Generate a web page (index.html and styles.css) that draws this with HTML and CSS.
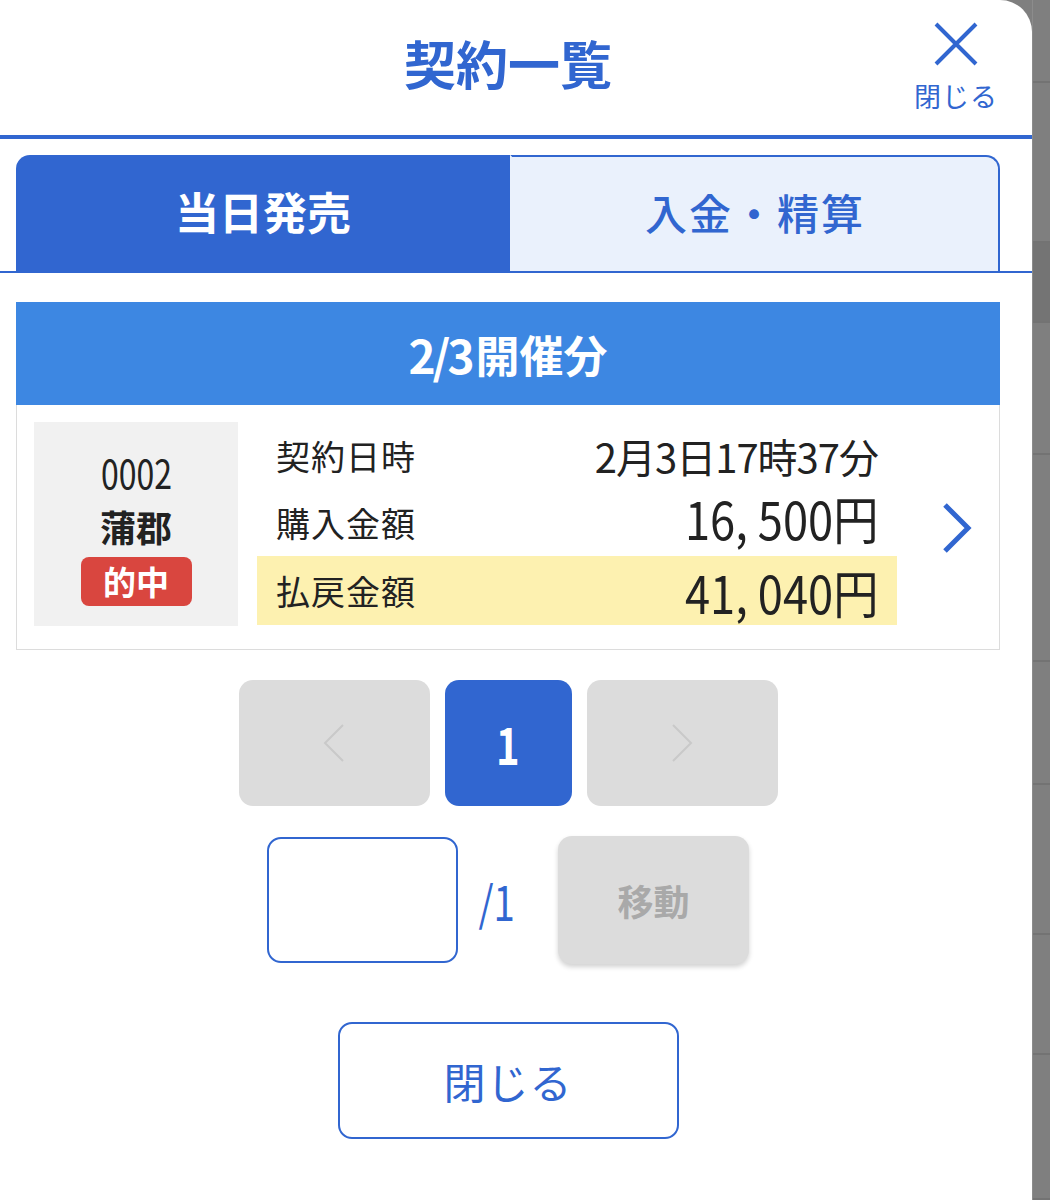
FILE: index.html
```html
<!DOCTYPE html>
<html lang="ja">
<head>
<meta charset="utf-8">
<title>契約一覧</title>
<link rel="stylesheet" href="styles.css">
</head>
<body>
<div class="screen">
  <div class="panel">
    <header class="head">
      <h1 class="title">契約一覧</h1>
      <button class="close-top" type="button">
        <svg class="close-x" viewBox="0 0 44 44" width="44" height="44"><path d="M2 2 L42 42 M42 2 L2 42" stroke="#3166d0" stroke-width="4" fill="none"/></svg>
        <span class="close-label">閉じる</span>
      </button>
    </header>
    <nav class="tabs">
      <div class="tab tab-active">当日発売</div>
      <div class="tab tab-idle">入金・精算</div>
    </nav>
    <main class="content">
      <div class="section-head"><span class="sec-num">2/3</span>開催分</div>
      <div class="card">
        <div class="race">
          <div class="race-no"><span class="cond">0002</span></div>
          <div class="race-place">蒲郡</div>
          <div class="badge">的中</div>
        </div>
        <div class="rows">
          <div class="row"><span class="label">契約日時</span><span class="val val-date">2月3日17時37分</span></div>
          <div class="row"><span class="label">購入金額</span><span class="val val-big val-buy">16, 500円</span></div>
          <div class="row row-hit"><span class="label">払戻金額</span><span class="val val-big val-pay">41, 040円</span></div>
        </div>
        <div class="chev">
          <svg viewBox="0 0 32 52" width="32" height="52"><path d="M4 3 L27 26 L4 49" stroke="#3166d0" stroke-width="5" fill="none"/></svg>
        </div>
      </div>
      <div class="pager">
        <button class="pg pg-arrow" type="button"><svg viewBox="0 0 24 40" width="24" height="40"><path d="M21 2 L3 20 L21 38" stroke="#c9c9c9" stroke-width="2" fill="none"/></svg></button>
        <button class="pg pg-current" type="button"><span class="cond">1</span></button>
        <button class="pg pg-arrow" type="button"><svg viewBox="0 0 24 40" width="24" height="40"><path d="M3 2 L21 20 L3 38" stroke="#c9c9c9" stroke-width="2" fill="none"/></svg></button>
      </div>
      <div class="jump">
        <div class="jump-input"></div>
        <span class="jump-total"><span class="cond">/1</span></span>
        <button class="jump-btn" type="button">移動</button>
      </div>
      <div class="foot">
        <button class="close-btn" type="button">閉じる</button>
      </div>
    </main>
  </div>
  <div class="backdrop">
    <div class="bd" style="height:83px"></div>
    <div class="bd" style="height:160px"></div>
    <div class="bd bd-dark" style="height:80px"></div>
    <div class="bd" style="height:132px"></div>
    <div class="bd" style="height:207px"></div>
    <div class="bd" style="height:123px"></div>
    <div class="bd" style="height:150px"></div>
    <div class="bd" style="height:120px"></div>
    <div class="bd" style="height:145px"></div>
  </div>
</div>
</body>
</html>
```

FILE: styles.css
```css
* { box-sizing: border-box; }
html, body { margin: 0; padding: 0; }
body {
  font-family: "Noto Sans CJK JP", "Noto Sans", sans-serif;
  color: #222;
  background: #7f7f7f;
}
button { font-family: inherit; }
.screen {
  display: flex;
  width: 1050px;
  height: 1200px;
  overflow: hidden;
}
.panel {
  width: 1032px;
  flex: none;
  background: #fff;
  border-top-right-radius: 32px;
  height: 1200px;
}
.backdrop {
  flex: 1;
  display: flex;
  flex-direction: column;
  border-left: 1px solid #8c8c8c;
}
.bd { border-bottom: 2px solid #737373; }
.bd-dark { background: #747474; }

.head {
  position: relative;
  height: 139px;
  border-bottom: 4px solid #3166d0;
  display: flex;
  justify-content: center;
  padding-right: 16px;
}
.title {
  margin: 0;
  font-size: 52px;
  font-weight: 700;
  color: #3166d0;
  line-height: 1;
  padding-top: 37px;
}
.close-top {
  position: absolute;
  right: 34px;
  top: 22px;
  background: none;
  border: 0;
  padding: 0;
  display: flex;
  flex-direction: column;
  align-items: center;
  color: #3166d0;
}
.close-x { display: block; }
.close-label {
  font-size: 27px;
  line-height: 1;
  margin-top: 16px;
  letter-spacing: 1px;
}

.tabs {
  display: flex;
  padding: 16px 32px 0 16px;
  border-bottom: 2px solid #3166d0;
}
.tab {
  height: 116px;
  display: flex;
  align-items: center;
  justify-content: center;
  line-height: 1;
}
.tab-active {
  width: 494px;
  background: #3166d0;
  color: #fff;
  font-size: 44px;
  font-weight: 700;
  border-top-left-radius: 14px;
  padding-bottom: 4px;
}
.tab-idle {
  flex: 1;
  background: #eaf1fc;
  color: #3166d0;
  font-size: 42px;
  font-weight: 500;
  border: 2px solid #3166d0;
  border-bottom: 0;
  border-left-color: #eaf1fc;
  border-top-right-radius: 14px;
  letter-spacing: 2px;
  padding-bottom: 4px;
}

.content {
  width: 984px;
  margin-left: 16px;
  padding-top: 29px;
}
.cond {
  display: inline-block;
  transform: scaleX(0.8);
  transform-origin: center center;
}
.section-head {
  height: 103px;
  background: #3d87e2;
  color: #fff;
  display: flex;
  align-items: center;
  justify-content: center;
  font-size: 44px;
  font-weight: 700;
  line-height: 1;
}
.sec-num {
  font-size: 46px;
  letter-spacing: -3px;
  margin-right: 4px;
}

.card {
  border: 1px solid #dcdcdc;
  border-top: 0;
  height: 245px;
  display: flex;
  padding: 17px 0 0 17px;
}
.race {
  width: 204px;
  height: 204px;
  background: #f1f1f1;
  display: flex;
  flex-direction: column;
  align-items: center;
  padding-top: 22px;
}
.race-no {
  font-size: 40px;
  line-height: 56px;
  color: #222;
}
.race-place {
  font-size: 36px;
  font-weight: 700;
  line-height: 52px;
  color: #222;
}
.badge {
  margin-top: 5px;
  width: 111px;
  height: 49px;
  background: #d9463f;
  color: #fff;
  border-radius: 8px;
  font-size: 33px;
  font-weight: 700;
  line-height: 49px;
  text-align: center;
}
.rows {
  width: 640px;
  margin-left: 19px;
  display: flex;
  flex-direction: column;
}
.row {
  height: 67px;
  display: flex;
  align-items: center;
  justify-content: space-between;
  padding: 0 19px;
}
.row-hit {
  height: 69px;
  background: #fdf1b0;
}
.label {
  font-size: 34px;
  line-height: 1;
  color: #222;
  letter-spacing: 1px;
}
.val {
  color: #222;
  line-height: 1;
  display: inline-block;
  transform-origin: right center;
}
.val-date { font-size: 40px; letter-spacing: -1px; }
.val-big { font-size: 52px; transform: scaleX(0.87); }
.val-buy { margin-bottom: 10px; }
.val-pay { margin-top: 2px; }
.chev {
  flex: 1;
  display: flex;
  align-items: center;
  justify-content: center;
  padding-bottom: 16px;
  padding-left: 18px;
}

.pager {
  display: flex;
  justify-content: center;
  gap: 15px;
  margin-top: 30px;
}
.pg {
  height: 126px;
  border: 0;
  border-radius: 14px;
  display: flex;
  align-items: center;
  justify-content: center;
  padding: 0;
}
.pg-arrow { width: 191px; background: #dcdcdc; }
.pg-current {
  width: 127px;
  background: #3166d0;
  color: #fff;
  font-size: 50px;
  font-weight: 700;
}
.jump {
  display: flex;
  align-items: center;
  justify-content: center;
  margin-top: 30px;
}
.jump-input {
  width: 191px;
  height: 126px;
  border: 2px solid #3166d0;
  border-radius: 14px;
  background: #fff;
}
.jump-total {
  margin: 0 42px 0 16px;
  width: 42px;
  text-align: center;
  color: #3166d0;
  font-size: 48px;
  line-height: 1;
}
.jump-btn {
  width: 191px;
  height: 128px;
  border: 0;
  border-radius: 14px;
  background: #dcdcdc;
  color: #a9a9a9;
  font-size: 36px;
  font-weight: 700;
  box-shadow: 0 3px 5px rgba(0,0,0,0.18);
}
.foot {
  display: flex;
  justify-content: center;
  margin-top: 58px;
}
.close-btn {
  width: 341px;
  height: 117px;
  background: #fff;
  border: 2px solid #3166d0;
  border-radius: 14px;
  color: #3166d0;
  font-size: 42px;
  font-weight: 400;
  letter-spacing: 1px;
}
```
